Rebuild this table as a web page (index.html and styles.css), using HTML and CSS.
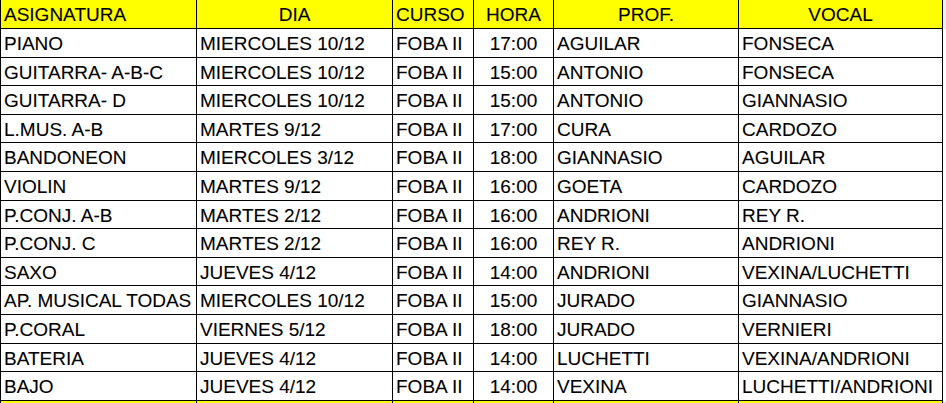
FILE: index.html
```html
<!DOCTYPE html>
<html lang="es">
<head>
<meta charset="utf-8">
<title>Mesas FOBA II</title>
<link rel="stylesheet" href="styles.css">
</head>
<body>
<div class="sheet">
  <div class="row head">
    <div class="cell first">ASIGNATURA</div>
    <div class="cell center">DIA</div>
    <div class="cell">CURSO</div>
    <div class="cell center">HORA</div>
    <div class="cell center">PROF.</div>
    <div class="cell center">VOCAL</div>
    <div class="filler"></div>
  </div>
  <div class="row">
    <div class="cell first">PIANO</div><div class="cell">MIERCOLES 10/12</div><div class="cell">FOBA II</div><div class="cell center">17:00</div><div class="cell">AGUILAR</div><div class="cell">FONSECA</div><div class="filler"></div>
  </div>
  <div class="row">
    <div class="cell first">GUITARRA- A-B-C</div><div class="cell">MIERCOLES 10/12</div><div class="cell">FOBA II</div><div class="cell center">15:00</div><div class="cell">ANTONIO</div><div class="cell">FONSECA</div><div class="filler"></div>
  </div>
  <div class="row">
    <div class="cell first">GUITARRA- D</div><div class="cell">MIERCOLES 10/12</div><div class="cell">FOBA II</div><div class="cell center">15:00</div><div class="cell">ANTONIO</div><div class="cell">GIANNASIO</div><div class="filler"></div>
  </div>
  <div class="row">
    <div class="cell first">L.MUS. A-B</div><div class="cell">MARTES 9/12</div><div class="cell">FOBA II</div><div class="cell center">17:00</div><div class="cell">CURA</div><div class="cell">CARDOZO</div><div class="filler"></div>
  </div>
  <div class="row">
    <div class="cell first">BANDONEON</div><div class="cell">MIERCOLES 3/12</div><div class="cell">FOBA II</div><div class="cell center">18:00</div><div class="cell">GIANNASIO</div><div class="cell">AGUILAR</div><div class="filler"></div>
  </div>
  <div class="row">
    <div class="cell first">VIOLIN</div><div class="cell">MARTES 9/12</div><div class="cell">FOBA II</div><div class="cell center">16:00</div><div class="cell">GOETA</div><div class="cell">CARDOZO</div><div class="filler"></div>
  </div>
  <div class="row">
    <div class="cell first">P.CONJ. A-B</div><div class="cell">MARTES 2/12</div><div class="cell">FOBA II</div><div class="cell center">16:00</div><div class="cell">ANDRIONI</div><div class="cell">REY R.</div><div class="filler"></div>
  </div>
  <div class="row">
    <div class="cell first">P.CONJ. C</div><div class="cell">MARTES 2/12</div><div class="cell">FOBA II</div><div class="cell center">16:00</div><div class="cell">REY R.</div><div class="cell">ANDRIONI</div><div class="filler"></div>
  </div>
  <div class="row">
    <div class="cell first">SAXO</div><div class="cell">JUEVES 4/12</div><div class="cell">FOBA II</div><div class="cell center">14:00</div><div class="cell">ANDRIONI</div><div class="cell">VEXINA/LUCHETTI</div><div class="filler"></div>
  </div>
  <div class="row">
    <div class="cell first">AP. MUSICAL TODAS</div><div class="cell">MIERCOLES 10/12</div><div class="cell">FOBA II</div><div class="cell center">15:00</div><div class="cell">JURADO</div><div class="cell">GIANNASIO</div><div class="filler"></div>
  </div>
  <div class="row">
    <div class="cell first">P.CORAL</div><div class="cell">VIERNES 5/12</div><div class="cell">FOBA II</div><div class="cell center">18:00</div><div class="cell">JURADO</div><div class="cell">VERNIERI</div><div class="filler"></div>
  </div>
  <div class="row">
    <div class="cell first">BATERIA</div><div class="cell">JUEVES 4/12</div><div class="cell">FOBA II</div><div class="cell center">14:00</div><div class="cell">LUCHETTI</div><div class="cell">VEXINA/ANDRIONI</div><div class="filler"></div>
  </div>
  <div class="row">
    <div class="cell first">BAJO</div><div class="cell">JUEVES 4/12</div><div class="cell">FOBA II</div><div class="cell center">14:00</div><div class="cell">VEXINA</div><div class="cell">LUCHETTI/ANDRIONI</div><div class="filler"></div>
  </div>
  <div class="row head">
    <div class="cell first"></div><div class="cell"></div><div class="cell"></div><div class="cell"></div><div class="cell"></div><div class="cell"></div><div class="filler"></div>
  </div>
</div>
</body>
</html>
```

FILE: styles.css
```css
html, body {
  margin: 0;
  padding: 0;
  background: #ffffff;
  overflow: hidden;
}

body {
  font-family: "Liberation Sans", Arial, sans-serif;
  font-size: 19px;
  color: #000000;
}

.sheet {
  display: grid;
  grid-template-columns: 197px 196px 81px 80px 185px 204px 1fr;
  grid-template-rows: 29px repeat(13, 28.615px) 1fr;
  width: 946px;
  height: 403px;
  overflow: hidden;
}

.row {
  display: contents;
}

.cell {
  box-sizing: border-box;
  border-right: 1px solid #000000;
  border-bottom: 1px solid #000000;
  display: flex;
  align-items: flex-end;
  padding: 0 3px 3.7px 3px;
  line-height: 19px;
  white-space: nowrap;
  overflow: hidden;
  -webkit-text-stroke: 0.1px #000000;
}

.cell.first {
  border-left: 1px solid #000000;
}

.cell.center {
  justify-content: center;
}

.head .cell {
  background: #ffff00;
}

.head .filler {
  background: #ececf2;
}

.filler {
  background: #ffffff;
}
```
